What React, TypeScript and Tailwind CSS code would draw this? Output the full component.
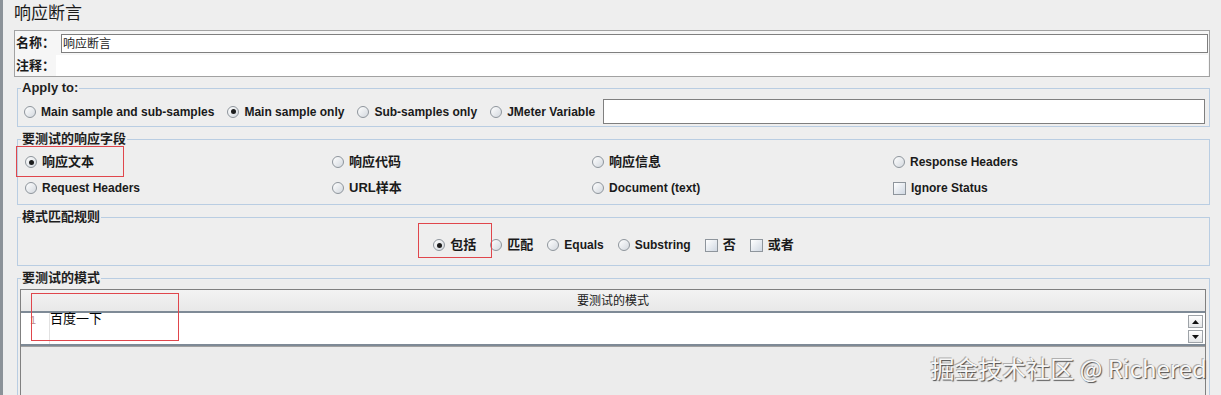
import React from "react";

// Swing-ish radio button
function Radio({ checked = false }: { checked?: boolean }) {
  return (
    <span className="flex h-[12px] w-[12px] shrink-0 items-center justify-center rounded-full border border-[#8e959c] bg-linear-to-br from-white to-[#d3d8de]">
      {checked && <span className="h-[5px] w-[5px] rounded-full bg-[#1c1c1c]" />}
    </span>
  );
}

function Check() {
  return <span className="block h-[13px] w-[13px] shrink-0 border border-[#8e959c] bg-linear-to-br from-white to-[#d0d8e2]" />;
}

function Option({ label, checked = false, box = false, cjk = false }: { label: string; checked?: boolean; box?: boolean; cjk?: boolean }) {
  return (
    <div className="flex h-[20px] items-center gap-[5px] whitespace-nowrap">
      {box ? <Check /> : <Radio checked={checked} />}
      <span className={cjk ? "text-[13px] font-bold leading-[16px]" : "text-[12px] font-bold leading-[16px]"}>{label}</span>
    </div>
  );
}

function Group({ title, className = "", children }: { title: string; className?: string; children: React.ReactNode }) {
  return (
    <fieldset className={`ml-[3px] shrink-0 border border-[#b9cde2] ${className}`}>
      <legend className="ml-[3px] px-[1px] text-[13px] font-bold leading-[14px] text-[#1e1e1e]">{title}</legend>
      {children}
    </fieldset>
  );
}

function Arrow({ up }: { up?: boolean }) {
  return (
    <div className="flex h-[13px] w-[15px] items-center justify-center border border-[#9ea3a8] bg-linear-to-b from-white to-[#e4e6e8]">
      <svg width="7" height="4" viewBox="0 0 7 4">
        {up ? <path d="M0 4 L3.5 0 L7 4 Z" fill="#111" /> : <path d="M0 0 L3.5 4 L7 0 Z" fill="#111" />}
      </svg>
    </div>
  );
}

export default function App() {
  return (
    <div className="relative flex h-[395px] w-[1221px] flex-col overflow-hidden border-l-[3px] border-[#8b9298] bg-[#eeeeee] pl-[11px] pr-[11px] font-['Liberation_Sans','Noto_Sans_CJK_SC',sans-serif] text-[#1a1a1a]">
      {/* title */}
      <div className="h-[30px] shrink-0 pt-[3px] text-[17px] leading-[22px]">响应断言</div>

      {/* name / comment box */}
      <div className="flex h-[47px] shrink-0 flex-col border border-[#a2a2a2] bg-[#f6f6f6] px-[1px]">
        <div className="flex h-[22px] items-end">
          <span className="w-[45px] pb-[2px] text-[13px] font-bold leading-[16px]">名称：</span>
          <div className="flex h-[19px] flex-1 items-center border border-[#7f7f7f] bg-white pl-[1px] text-[12px]">响应断言</div>
        </div>
        <div className="mt-[2px] flex h-[21px] items-center">
          <span className="w-[40px] text-[13px] font-bold leading-[16px]">注释：</span>
          <div className="h-full flex-1 bg-white" />
        </div>
      </div>

      {/* Apply to */}
      <Group title="Apply to:" className="mt-[4px]">
        <div className="flex items-center gap-[13px] pb-[2px] pl-[6px] pr-[4px] pt-[4px]">
          <Option label="Main sample and sub-samples" />
          <Option label="Main sample only" checked />
          <Option label="Sub-samples only" />
          <Option label="JMeter Variable" />
          <div className="ml-[-5px] h-[25px] flex-1 border border-[#7f7f7f] bg-white" />
        </div>
      </Group>

      {/* fields to test */}
      <Group title="要测试的响应字段" className="mt-[5px]">
        <div className="grid grid-cols-[307px_260px_301px_1fr] gap-y-[6px] pb-[6px] pl-[7px] pt-[6px]">
          <div className="relative">
            <Option label="响应文本" checked cjk />
            <div className="absolute left-[-9px] top-[-6px] h-[31px] w-[108px] border border-[#e0464c]" />
          </div>
          <Option label="响应代码" cjk />
          <Option label="响应信息" cjk />
          <Option label="Response Headers" />
          <Option label="Request Headers" />
          <Option label="URL样本" cjk />
          <Option label="Document (text)" />
          <Option label="Ignore Status" box />
        </div>
      </Group>

      {/* match rules */}
      <Group title="模式匹配规则" className="mt-[5px]">
        <div className="flex items-center justify-center gap-[14px] pb-[10px] pt-[11px]">
          <div className="relative">
            <Option label="包括" checked cjk />
            <div className="absolute left-[-15px] top-[-12px] h-[35px] w-[74px] border border-[#e0464c]" />
          </div>
          <Option label="匹配" cjk />
          <Option label="Equals" />
          <Option label="Substring" />
          <Option label="否" box cjk />
          <Option label="或者" box cjk />
        </div>
      </Group>

      {/* patterns to test */}
      <Group title="要测试的模式" className="mt-[5px] h-[140px]">
        <div className="relative ml-[2px] mr-[3px] mt-[4px] border-x border-t border-[#808080]">
          <div className="flex h-[21px] items-center justify-center bg-linear-to-b from-[#f3f3f3] to-[#e8e8e8] text-[12px] leading-[14px]">要测试的模式</div>
          <div className="flex h-[35px] border-y-2 border-[#7e8a96] bg-white">
            <div className="w-[29px] border-r border-[#e2e2e2] pl-[9px] pt-[1px] text-[11px] leading-[12px] text-[#c09090]">1</div>
            <div className="flex-1 pt-0 text-[13px] leading-[12px] text-black">百度一下</div>
            <div className="mr-[2px] mt-[2px] flex flex-col gap-[2px]">
              <Arrow up />
              <Arrow />
            </div>
          </div>
          <div className="h-[60px] border-t border-[#a0a0a0] bg-[#ececec]" />
          <div className="absolute left-[10px] top-[3px] h-[48px] w-[148px] border border-[#e0464c]" />
        </div>
      </Group>

      {/* watermark */}
      <div className="absolute bottom-[13px] right-[14px] font-['Noto_Sans_CJK_SC',sans-serif] text-[24px] leading-[28px] text-[#f7f7f7] [text-shadow:1px_1px_1px_#4a4a4a,-1px_-1px_0_#b0b0b0]">
        掘金技术社区 @ Richered
      </div>
    </div>
  );
}
